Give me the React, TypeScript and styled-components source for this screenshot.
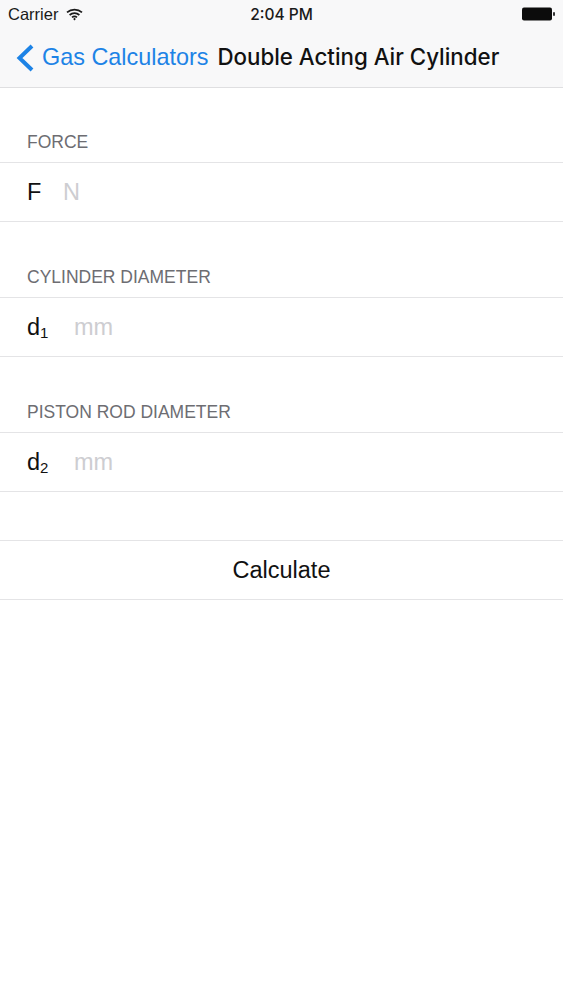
import React from 'react';
import styled, { createGlobalStyle } from 'styled-components';

const GlobalStyle = createGlobalStyle`
  html, body {
    margin: 0;
    padding: 0;
    background: #ffffff;
    font-family: "Liberation Sans", Arial, sans-serif;
  }
`;

const Page = styled.div`
  width: 563px;
  height: 1000px;
  overflow: hidden;
  background: #ffffff;
`;

const TopBar = styled.header`
  height: 87px;
  margin-bottom: -1px;
  background: #f8f8f9;
  border-bottom: 1px solid #dfdfe1;
`;

const StatusBar = styled.div`
  height: 28px;
  display: grid;
  grid-template-columns: 1fr auto 1fr;
  align-items: center;
  padding: 0 8px;
  font-size: 16.5px;
  color: #1a1a1a;
`;

const Carrier = styled.div`
  display: flex;
  align-items: center;
  gap: 8px;
`;

const Clock = styled.div`
  font-family: Inter, "Liberation Sans", sans-serif;
  font-weight: 500;
  font-size: 15.5px;
`;

const Battery = styled.svg`
  justify-self: end;
  display: block;
`;

const NavBar = styled.nav`
  height: 59px;
  display: flex;
  align-items: center;
  padding-left: 16px;
`;

const BackLink = styled.a`
  display: flex;
  align-items: center;
  gap: 8px;
  color: #1d83e6;
  font-size: 23.4px;
`;

const Title = styled.h1`
  margin: 0 0 2px 9px;
  font-family: Inter, "Liberation Sans", sans-serif;
  font-size: 22.3px;
  font-weight: 500;
  color: #111111;
  white-space: nowrap;
`;

const Section = styled.section`
  display: flex;
  flex-direction: column;
`;

const SectionLabel = styled.div`
  height: 75px;
  box-sizing: border-box;
  padding: 0 27px 9px;
  display: flex;
  align-items: flex-end;
  font-size: 17.5px;
  line-height: 22px;
  color: #6d6d72;
`;

const Row = styled.div`
  height: 60px;
  box-sizing: border-box;
  display: flex;
  align-items: center;
  padding-left: 27px;
  background: #ffffff;
  border-top: 1px solid #e4e4e6;
  border-bottom: 1px solid #e4e4e6;
  font-size: 23.5px;
  color: #111111;
`;

const Symbol = styled.span<{ $width: number }>`
  width: ${(props) => props.$width}px;
  flex: none;
`;

const Sub = styled.sub`
  font-size: 15px;
  line-height: 0;
  vertical-align: -3px;
`;

const Placeholder = styled.span`
  color: #cdcdd1;
`;

const ButtonRow = styled(Row)`
  justify-content: center;
  padding-left: 0;
  margin-top: 48px;
`;

const fields = [
  { label: 'FORCE', symbol: 'F', sub: '', width: 36, unit: 'N' },
  { label: 'CYLINDER DIAMETER', symbol: 'd', sub: '1', width: 47, unit: 'mm' },
  { label: 'PISTON ROD DIAMETER', symbol: 'd', sub: '2', width: 47, unit: 'mm' },
];

const App: React.FC = () => {
  return (
    <Page>
      <GlobalStyle />
      <TopBar>
        <StatusBar>
          <Carrier>
            Carrier
            <svg width="17" height="13" viewBox="0 0 17 13" fill="none" stroke="#1a1a1a" strokeWidth="1.7">
              <path d="M1 4.4C5.2 .6 11.8 .6 16 4.4" />
              <path d="M3.6 7C6.4 4.5 10.6 4.5 13.4 7" />
              <path d="M6 9.4C7.4 8.2 9.6 8.2 11 9.4" />
              <path d="M7.2 10.9L8.5 9.8L9.8 10.9L8.5 12.4Z" fill="#1a1a1a" stroke="none" />
            </svg>
          </Carrier>
          <Clock>2:04 PM</Clock>
          <Battery width="33" height="14" viewBox="0 0 33 14">
            <rect x="0" y="0.5" width="30" height="13" rx="2" fill="#0c0c0c" />
            <rect x="31" y="5" width="2" height="4" rx="1" fill="#333333" />
          </Battery>
        </StatusBar>
        <NavBar>
          <BackLink>
            <svg width="18" height="28" viewBox="0 0 18 28" fill="none" stroke="#1d83e6" strokeWidth="4">
              <path d="M16 2L3.5 14L16 26" />
            </svg>
            Gas Calculators
          </BackLink>
          <Title>Double Acting Air Cylinder</Title>
        </NavBar>
      </TopBar>
      {fields.map((field) => (
        <Section key={field.label}>
          <SectionLabel>{field.label}</SectionLabel>
          <Row>
            <Symbol $width={field.width}>
              {field.symbol}
              {field.sub && <Sub>{field.sub}</Sub>}
            </Symbol>
            <Placeholder>{field.unit}</Placeholder>
          </Row>
        </Section>
      ))}
      <ButtonRow>Calculate</ButtonRow>
    </Page>
  );
};

export default App;
